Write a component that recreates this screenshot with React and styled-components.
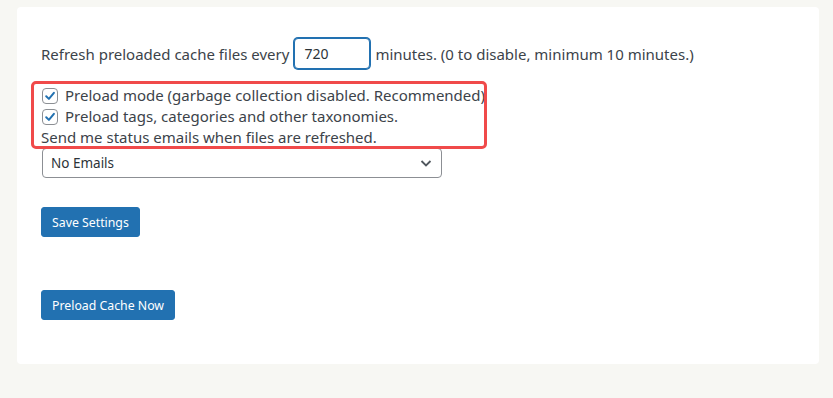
import React from "react";
import styled, { createGlobalStyle } from "styled-components";

const GlobalStyle = createGlobalStyle`
  html, body {
    margin: 0;
    padding: 0;
    background: #f7f7f3;
  }
  body {
    font-family: "Noto Sans", "Open Sans", Arial, sans-serif;
    color: #3c434a;
  }
`;

function Checkbox({ label }) {
  return (
    <CheckRow>
      <Box>
        <svg width="12" height="12" viewBox="0 0 12 12">
          <polyline
            points="2.2,6.3 4.9,8.9 9.9,2.8"
            fill="none"
            stroke="#2271b1"
            strokeWidth="2"
            strokeLinecap="round"
            strokeLinejoin="round"
          />
        </svg>
      </Box>
      <span>{label}</span>
    </CheckRow>
  );
}

function App() {
  return (
    <Page>
      <GlobalStyle />
      <Card>
        <RefreshRow>
          <span>Refresh preloaded cache files every</span>
          <NumberInput defaultValue="720" />
          <span>minutes. (0 to disable, minimum 10 minutes.)</span>
        </RefreshRow>

        <Highlight>
          <Checkbox label="Preload mode (garbage collection disabled. Recommended)" />
          <Checkbox label="Preload tags, categories and other taxonomies." />
          <Line>Send me status emails when files are refreshed.</Line>
        </Highlight>

        <SelectBox>
          <span>No Emails</span>
          <svg width="14" height="14" viewBox="0 0 14 14">
            <polyline
              points="2.5,5 7,9.5 11.5,5"
              fill="none"
              stroke="#50575e"
              strokeWidth="1.8"
            />
          </svg>
        </SelectBox>

        <Actions>
          <Button>Save Settings</Button>
          <Button>Preload Cache Now</Button>
        </Actions>
      </Card>
    </Page>
  );
}

const Page = styled.div`
  padding: 7px 14px 34px 17px;
`;

const Card = styled.div`
  background: #fff;
  border-radius: 4px;
  padding: 31px 24px 44px;
  display: flex;
  flex-direction: column;
  align-items: flex-start;
`;

const RefreshRow = styled.div`
  display: flex;
  align-items: center;
  gap: 5px;
  font-size: 15px;
  line-height: 20px;
`;

const NumberInput = styled.input`
  box-sizing: border-box;
  width: 76px;
  height: 31px;
  padding: 0 9px;
  border: 1px solid #2271b1;
  box-shadow: 0 0 0 1px #2271b1;
  border-radius: 4px;
  font-family: inherit;
  font-size: 14px;
  color: #2c3338;
  outline: none;
  margin: 0 0 0 0;
`;

const Highlight = styled.div`
  position: relative;
  margin-top: 16px;
  display: flex;
  flex-direction: column;
  font-size: 15px;
  line-height: 21px;

  &::after {
    content: "";
    position: absolute;
    left: -10px;
    top: -4px;
    width: 456px;
    bottom: -1px;
    border: 3px solid #f04a4a;
    border-radius: 5px;
    box-sizing: border-box;
    pointer-events: none;
  }
`;

const CheckRow = styled.label`
  display: flex;
  align-items: center;
  gap: 7px;
  height: 21px;
  padding-left: 1px;
`;

const Box = styled.span`
  box-sizing: border-box;
  width: 16px;
  height: 16px;
  border: 1px solid #8c8f94;
  border-radius: 4px;
  display: flex;
  align-items: center;
  justify-content: center;
`;

const Line = styled.div`
  height: 21px;
`;

const SelectBox = styled.div`
  box-sizing: border-box;
  width: 400px;
  height: 30px;
  margin-left: 1px;
  border: 1px solid #8c8f94;
  border-radius: 4px;
  display: flex;
  align-items: center;
  justify-content: space-between;
  padding: 0 8px 0 8px;
  font-size: 13.5px;
  color: #2c3338;
`;

const Actions = styled.div`
  display: flex;
  flex-direction: column;
  align-items: flex-start;
  gap: 53px;
  margin-top: 29px;
`;

const Button = styled.button`
  height: 30px;
  padding: 0 10px;
  border: 1px solid #2271b1;
  border-radius: 3px;
  background: #2271b1;
  color: #fff;
  font-family: inherit;
  font-size: 12.3px;
  cursor: pointer;
`;

export default App;
